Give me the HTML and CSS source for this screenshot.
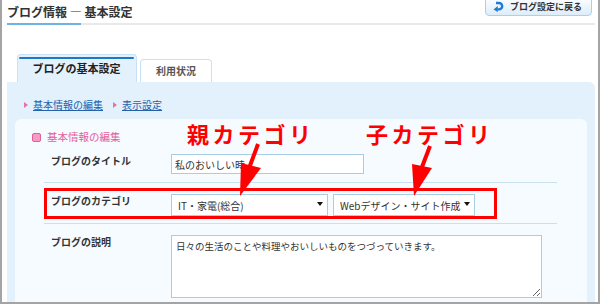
FILE: index.html
```html
<!DOCTYPE html>
<html lang="ja">
  <head>
    <meta charset="UTF-8" />
    <meta name="viewport" content="width=device-width, initial-scale=1.0" />
    <title>ブログ情報 - 基本設定</title>
    <link rel="stylesheet" href="styles.css">
  </head>
  <body>
    <div class="frame">
      <header class="page-head">
        <h1>ブログ情報 — 基本設定</h1>
        <a class="back-btn" href="#">
          <svg width="11" height="11" viewBox="0 0 11 11">
            <path d="M3 2 H6 A3.2 3.2 0 0 1 6 8.4 H4.5" fill="none" stroke="#1c7bd4" stroke-width="2.4" />
            <polygon points="0.5,8.4 4.8,4.9 4.8,11" fill="#1c7bd4" />
          </svg>
          ブログ設定に戻る
        </a>
      </header>
      <div class="head-rule"><span></span></div>

      <ul class="tabs">
        <li class="tab active">ブログの基本設定</li>
        <li class="tab">利用状況</li>
      </ul>

      <div class="panel">
        <ul class="crumbs">
          <li><a href="#">基本情報の編集</a></li>
          <li><a href="#">表示設定</a></li>
        </ul>

        <div class="form-box">
          <h2>基本情報の編集</h2>

          <div class="form-row first">
            <label for="blogTitle">ブログのタイトル</label>
            <div><input id="blogTitle" class="text-input" type="text" value="私のおいしい時"></div>
          </div>

          <div class="form-row">
            <label for="parentCat">ブログのカテゴリ</label>
            <div class="select-group">
              <span class="select">
                <select id="parentCat" class="wide"><option>IT・家電(総合)</option></select>
              </span>
              <span class="select">
                <select class="narrow"><option>Webデザイン・サイト作成</option></select>
              </span>
            </div>
            <div class="highlight"></div>
          </div>

          <div class="form-row">
            <label for="blogDesc">ブログの説明</label>
            <div><textarea id="blogDesc">日々の生活のことや料理やおいしいものをつづっていきます。</textarea></div>
          </div>
        </div>
      </div>

      <!-- annotations drawn over the screenshot -->
      <div class="note note-parent">親カテゴリ</div>
      <div class="note note-child">子カテゴリ</div>
      <svg class="arrows" width="600" height="304" viewBox="0 0 600 304">
        <line x1="256" y1="144" x2="247.5" y2="167" stroke="#ff0000" stroke-width="4" />
        <polygon points="239,163 259,168 238,196" fill="#ff0000" />
        <line x1="428" y1="146" x2="420" y2="167" stroke="#ff0000" stroke-width="4" />
        <polygon points="410,164 430,168 412,196" fill="#ff0000" />
      </svg>
    </div>
  </body>
</html>
```

FILE: styles.css
```css
* {
  box-sizing: border-box;
  margin: 0;
  padding: 0;
}

body {
  font-family: "Noto Sans CJK JP", "Noto Sans", sans-serif;
  color: #333;
  background-color: #fff;
}

.frame {
  position: relative;
  width: 600px;
  height: 304px;
  border: 2px solid #a4a4a4;
  border-top: 0;
  padding: 0 3px 0 5px;
  overflow: hidden;
  background-color: #fff;
}

/* header */

.page-head {
  display: flex;
  justify-content: space-between;
  align-items: flex-start;
  height: 23px;
}

.page-head h1 {
  margin-top: 5px;
  font-size: 12px;
  line-height: 14px;
  font-weight: bold;
  color: #333;
}

.back-btn {
  display: flex;
  align-items: center;
  gap: 6px;
  width: 107px;
  height: 20px;
  margin: -4px 3px 0 0;
  padding: 1px 0 0 7px;
  border: 1px solid #a9d0ec;
  border-radius: 4px;
  background: linear-gradient(#fff, #dcedfa);
  font-size: 9px;
  font-weight: bold;
  color: #333;
  text-decoration: none;
}

.head-rule {
  display: flex;
  height: 2px;
  background-color: #e9e9e9;
}

.head-rule span {
  width: 74px;
  background-color: #6cb3e3;
}

/* tabs */

.tabs {
  display: flex;
  align-items: flex-end;
  gap: 3px;
  margin: 29px 0 0 10px;
  list-style: none;
}

.tab {
  width: 72px;
  height: 23px;
  border: 1px solid #c7e2f5;
  border-bottom: 0;
  border-radius: 4px 4px 0 0;
  background-color: #fff;
  text-align: center;
  font-size: 10px;
  font-weight: bold;
  line-height: 21px;
  color: #555;
}

.tab.active {
  width: 120px;
  height: 28px;
  padding: 2px 2px 0 1px;
  background-color: #e2f1fc;
  font-size: 11px;
  line-height: 14px;
  color: #222;
}

.tab.active::before {
  content: "";
  display: block;
  height: 2px;
  margin-bottom: 2px;
  border-radius: 1px;
  background-color: #1f78c6;
}

/* panel */

.panel {
  height: 220px;
  padding: 16px 8px 0;
  border-radius: 0 6px 0 0;
  background-color: #e2f1fc;
}

.crumbs {
  display: flex;
  gap: 10px;
  margin-bottom: 7px;
  padding-left: 9px;
  list-style: none;
  font-size: 10px;
  line-height: 14px;
}

.crumbs li {
  display: flex;
  align-items: center;
}

.crumbs li::before {
  content: "";
  margin-right: 5px;
  border-left: 4px solid #e8739f;
  border-top: 3px solid transparent;
  border-bottom: 3px solid transparent;
}

.crumbs a {
  color: #2560ab;
}

.form-box {
  height: 200px;
  padding-top: 12px;
  border-radius: 6px 6px 0 0;
  background-color: #f6fbff;
}

.form-box h2 {
  display: flex;
  align-items: center;
  gap: 6px;
  padding-left: 17px;
  font-size: 10.5px;
  font-weight: normal;
  line-height: 12px;
  color: #e2609b;
}

.form-box h2::before {
  content: "";
  width: 7px;
  height: 7px;
  border: 1px solid #e0609a;
  border-radius: 2px;
  background-color: #f59bc4;
}

.form-row {
  position: relative;
  display: grid;
  grid-template-columns: 127px 1fr;
  align-items: start;
  margin: 0 30px 0 29px;
  padding: 11px 0 7px;
  border-bottom: 1px solid #c8e0f0;
}

.form-row.first {
  padding-bottom: 8px;
}

.form-row label {
  padding: 1px 0 0 7px;
  font-size: 10px;
  font-weight: bold;
  line-height: 12px;
  color: #333;
}

.text-input {
  display: block;
  width: 193px;
  height: 20px;
  padding: 0 3px;
  border: 1px solid #a9cde5;
  font-family: "Noto Sans CJK JP", sans-serif;
  font-size: 10px;
  color: #333;
  background-color: #fff;
}

.select-group {
  display: flex;
  gap: 5px;
}

.select {
  position: relative;
  display: block;
}

.select select {
  display: block;
  appearance: none;
  height: 22px;
  padding: 0 6px;
  border: 1px solid #a9cde5;
  border-radius: 0;
  background-color: #fff;
  font-family: "Noto Sans CJK JP", sans-serif;
  font-size: 10px;
  color: #333;
}

.select select.wide {
  width: 157px;
}

.select select.narrow {
  width: 142px;
}

.select::after {
  content: "";
  position: absolute;
  right: 5px;
  top: 8px;
  border-top: 4px solid #111;
  border-left: 3px solid transparent;
  border-right: 3px solid transparent;
}

textarea {
  display: block;
  width: 371px;
  height: 63px;
  padding: 3px 4px;
  border: 1px solid #a9cde5;
  font-family: "Noto Sans CJK JP", sans-serif;
  font-size: 9.5px;
  line-height: 14px;
  color: #333;
  background-color: #fff;
}

/* annotations */

.highlight {
  position: absolute;
  left: 0;
  top: 5px;
  width: 453px;
  height: 31px;
  border: 3px solid #ff0000;
}

.note {
  position: absolute;
  top: 122px;
  font-size: 22px;
  font-weight: bold;
  line-height: 22px;
  letter-spacing: 3.5px;
  color: #ff0000;
  white-space: nowrap;
}

.note-parent {
  left: 185px;
}

.note-child {
  left: 364px;
}

.arrows {
  position: absolute;
  left: 0;
  top: 0;
}
```
